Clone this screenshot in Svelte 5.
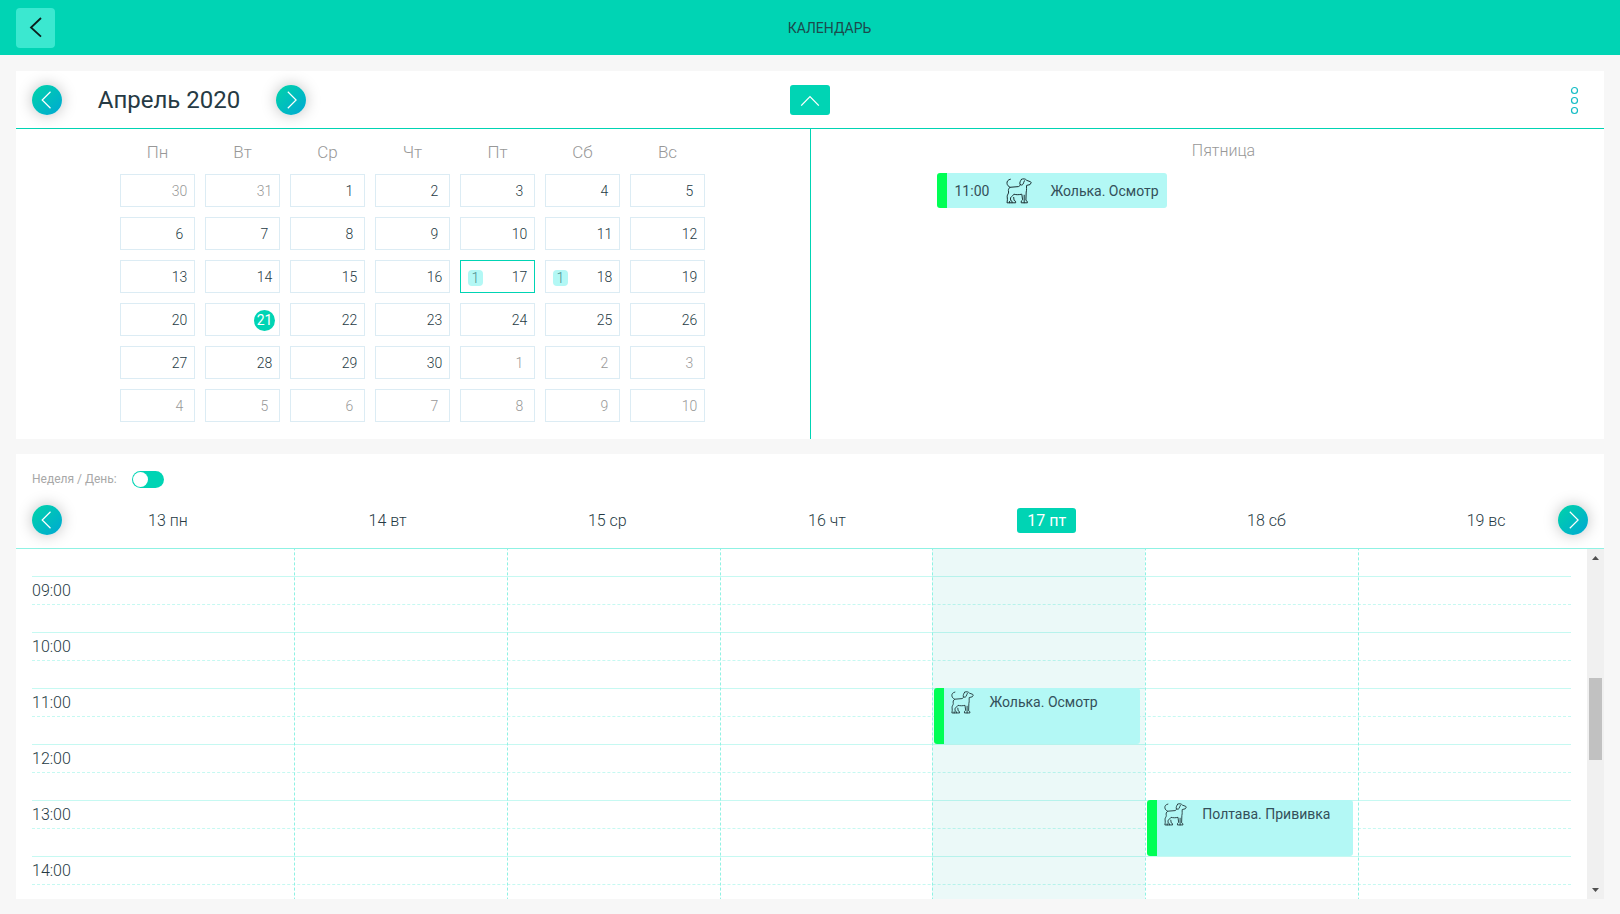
<script lang="ts">
	import { onMount } from 'svelte';

	type CalendarEvent = { day: number; hour: number; hours: number; title: string };

	const HOUR_HEIGHT = 56;
	const DAY_START = 477;

	const weekdays = ['Пн', 'Вт', 'Ср', 'Чт', 'Пт', 'Сб', 'Вс'];
	const hours = Array.from({ length: 24 }, (_, i) => i);

	const events: CalendarEvent[] = [
		{ day: 17, hour: 11, hours: 1, title: 'Жолька. Осмотр' },
		{ day: 18, hour: 13, hours: 1, title: 'Полтава. Прививка' }
	];

	const today = 21;
	let selected = 17;
	let monthOpen = true;
	let dayMode = false;

	// April 2020 starts on a Wednesday, six full weeks are always shown
	const cells = Array.from({ length: 42 }, (_, i) => {
		const n = i - 1;
		if (n < 1) return { day: n + 31, current: false };
		if (n > 30) return { day: n - 30, current: false };
		return { day: n, current: true };
	});

	const week = [13, 14, 15, 16, 17, 18, 19].map((day, i) => ({
		day,
		label: `${day} ${weekdays[i].toLowerCase()}`
	}));

	$: dayEvents = events.filter((e) => e.day === selected);

	let scroller: HTMLDivElement;
	let viewHeight = 350;
	let scrollTop = DAY_START;
	const total = HOUR_HEIGHT * 24;

	$: thumbTop = (scrollTop / total) * 100;
	$: thumbHeight = (viewHeight / total) * 100;

	// labels outside the viewport are not rendered
	$: inView = (hour: number) => {
		const top = hour * HOUR_HEIGHT;
		return top + HOUR_HEIGHT / 2 > scrollTop && top < scrollTop + viewHeight;
	};

	const formatHour = (hour: number) => `${String(hour).padStart(2, '0')}:00`;
	const countFor = (day: number) => events.filter((e) => e.day === day).length;
	const scrollBy = (delta: number) => scroller.scrollBy({ top: delta });

	onMount(() => {
		scroller.scrollTop = DAY_START;
	});
</script>

{#snippet chevron(direction: 'left' | 'right')}
	<svg width="30" height="30" viewBox="0 0 30 30" fill="none" stroke="currentColor" stroke-width="1.2">
		{#if direction === 'left'}
			<path d="M18.5 6.8L10.2 15l8.3 8.2" />
		{:else}
			<path d="M11.8 6.8l8.3 8.2-8.3 8.2" />
		{/if}
	</svg>
{/snippet}

{#snippet dog(size: number)}
	<svg
		class="dog"
		width={size}
		height={size}
		viewBox="0 0 26 26"
		fill="none"
		stroke="#1d3336"
		stroke-width="1"
		stroke-linejoin="round"
		stroke-linecap="round"
	>
		<path
			d="M4.4 1.2C1.8 1.8.8 3.4 1 5.4 1.2 7.4 2.6 8.4 4 9.3L12.4 8.6C13.600 8.300 14.200 7.400 14.400 6.400"
		/>
		<path
			d="M4 9.300C2.600 10.400 2 12 2.600 14 2.800 15.400 1.200 16.800 1.200 18.200L1.400 21.800 1 24.800H6.200L6 23.200 4.600 22.400 4.500 19.600C6 18.400 7.400 17.200 7.900 16.200 10.400 16.900 13.200 16.800 15.800 16.200L16.600 21.800 15.300 23 15.200 24.800H21.400L21.200 23.300 19.900 22.400 20.200 14C20.900 11.600 20.300 9.600 20.600 7.400L24 6.600 25.200 4.700 24.600 3.800 20.800 2.400C19.600.7 17 .4 15.500 1.300"
		/>
		<path d="M15.500 1.300C14.400 2.700 13.500 4.900 13.900 6.100 14.600 7.400 16.200 7.300 17 6.200 17.800 5 17.700 3.500 18.400 2.700" />
		<path d="M6.200 24.800H9.700L9.500 23.200 8.100 22.400 7.700 19.400M18.200 17.200V24.800M3.600 23.400V24.800" />
	</svg>
{/snippet}

<div class="page">
	<header class="top-bar">
		<button type="button" class="back" aria-label="Назад">
			<svg width="39" height="40" viewBox="0 0 39 40" fill="none" stroke="#0b1f1d" stroke-width="1.8">
				<path d="M25 10L15 19.500l10 9.200" />
			</svg>
		</button>
		<h1>КАЛЕНДАРЬ</h1>
	</header>

	<main>
		<section class="panel">
			<div class="month-bar">
				<div class="month-nav">
					<button type="button" class="round" aria-label="Предыдущий месяц">{@render chevron('left')}</button>
					<h2>Апрель 2020</h2>
					<button type="button" class="round" aria-label="Следующий месяц">{@render chevron('right')}</button>
				</div>
				<button
					type="button"
					class="collapse"
					aria-label="Свернуть"
					aria-expanded={monthOpen}
					on:click={() => (monthOpen = !monthOpen)}
				>
					<svg width="40" height="30" viewBox="0 0 40 30" fill="none" stroke="#fff" stroke-width="1.3">
						<path d="M11.200 20.600L20 11.600l8.800 9" />
					</svg>
				</button>
				<button type="button" class="more" aria-label="Меню">
					<svg width="28" height="30" viewBox="0 0 28 30" fill="none" stroke="#14bcc4" stroke-width="1.2">
						<circle cx="14.500" cy="5.500" r="3" />
						<circle cx="14.500" cy="15.500" r="3" />
						<circle cx="14.500" cy="25.500" r="3" />
					</svg>
				</button>
			</div>

			{#if monthOpen}
				<div class="month-body">
					<div class="month-pane">
						<div class="month-grid">
							{#each weekdays as name}
								<span class="weekday">{name}</span>
							{/each}
							{#each cells as cell}
								{@const count = cell.current ? countFor(cell.day) : 0}
								<button
									type="button"
									class="cell"
									class:muted={!cell.current}
									class:selected={cell.current && cell.day === selected}
									on:click={() => cell.current && (selected = cell.day)}
								>
									{#if count}
										<span class="count">{count}</span>
									{/if}
									<span class="number" class:today={cell.current && cell.day === today}>{cell.day}</span>
								</button>
							{/each}
						</div>
					</div>
					<div class="day-pane">
						<div class="day-list">
							<h3>Пятница</h3>
							{#each dayEvents as event}
								<button type="button" class="day-event">
									<span class="time">{formatHour(event.hour)}</span>
									{@render dog(26)}
									<span>{event.title}</span>
								</button>
							{/each}
						</div>
					</div>
				</div>
			{/if}
		</section>

		<section class="panel week">
			<label class="mode">
				<span>Неделя / День:</span>
				<input type="checkbox" role="switch" bind:checked={dayMode} />
			</label>
			<div class="week-bar">
				<button type="button" class="round" aria-label="Предыдущая неделя">{@render chevron('left')}</button>
				<div class="week-days">
					{#each week as item}
						<div class="week-day">
							<span class:active={item.day === selected}>{item.label}</span>
						</div>
					{/each}
				</div>
				<button type="button" class="round" aria-label="Следующая неделя">{@render chevron('right')}</button>
			</div>

			<div class="schedule">
				<div
					class="scroller"
					bind:this={scroller}
					bind:clientHeight={viewHeight}
					on:scroll={() => (scrollTop = scroller.scrollTop)}
				>
					<div class="grid">
						<div class="hours">
							{#each hours as hour}
								<div class="hour">
									<span>{inView(hour) ? formatHour(hour) : ''}</span>
								</div>
							{/each}
						</div>
						<div class="columns">
							{#each week as item}
								<div class="column" class:active={item.day === selected}>
									{#each events.filter((e) => e.day === item.day) as event}
										<button
											type="button"
											class="event"
											style="top: {event.hour * HOUR_HEIGHT}px; height: {event.hours * HOUR_HEIGHT}px;"
										>
											{@render dog(23)}
											<span>{event.title}</span>
										</button>
									{/each}
								</div>
							{/each}
						</div>
					</div>
				</div>
				<div class="scrollbar">
					<button type="button" aria-label="Вверх" on:click={() => scrollBy(-HOUR_HEIGHT)}>
						<svg width="17" height="17" viewBox="0 0 17 17" fill="#505050"><path d="M5 11h7L8.500 7z" /></svg>
					</button>
					<div class="track">
						<div class="thumb" style="top: {thumbTop}%; height: {thumbHeight}%;"></div>
					</div>
					<button type="button" aria-label="Вниз" on:click={() => scrollBy(HOUR_HEIGHT)}>
						<svg width="17" height="17" viewBox="0 0 17 17" fill="#505050"><path d="M5 6h7l-3.500 4z" /></svg>
					</button>
				</div>
			</div>
		</section>
	</main>
</div>

<style>
	:global(body) {
		margin: 0;
		background: #f7f7f7;
	}

	.page {
		--accent: #00d4b4;
		--text: #263a44;
		--muted: #a8a8a8;
		--event: #b3f8f5;
		--event-text: #33505a;
		display: flex;
		flex-direction: column;
		height: 100vh;
		font-family: Roboto, 'Liberation Sans', sans-serif;
		font-size: 14px;
		font-weight: 400;
		color: var(--text);
	}

	.page * {
		box-sizing: border-box;
	}

	h1,
	h2,
	h3 {
		margin: 0;
		font-weight: 400;
	}

	button {
		padding: 0;
		border: none;
		background: none;
		font: inherit;
		color: inherit;
		cursor: pointer;
	}

	svg {
		display: block;
		flex: none;
	}

	.top-bar {
		display: flex;
		align-items: center;
		flex: none;
		height: 55px;
		padding: 0 16px;
		background: var(--accent);
	}

	.top-bar h1 {
		flex: 1;
		font-size: 14px;
		line-height: 16px;
		text-align: center;
		color: #1c4a4c;
	}

	.back {
		border-radius: 4px;
		background: #3be8d0;
	}

	main {
		display: flex;
		flex: 1;
		flex-direction: column;
		gap: 15px;
		min-height: 0;
		padding: 16px 16px 15px;
	}

	.panel {
		background: #fff;
	}

	.month-bar {
		display: grid;
		grid-template-columns: 1fr auto 1fr;
		align-items: center;
		height: 58px;
		padding: 0 16px;
		border-bottom: 1px solid var(--accent);
	}

	.month-nav {
		display: flex;
		align-items: center;
	}

	.month-nav h2 {
		width: 214px;
		font-size: 24px;
		text-align: center;
	}

	.round {
		position: relative;
		z-index: 1;
		flex: none;
		width: 30px;
		height: 30px;
		border-radius: 50%;
		background: linear-gradient(135deg, #00d4a8, #00a8d4);
		box-shadow: 0 0 15px rgba(0, 0, 0, 0.25);
		color: #fff;
	}

	.collapse {
		border-radius: 3px;
		background: var(--accent);
	}

	.more {
		justify-self: end;
	}

	.month-body {
		display: grid;
		grid-template-columns: 1fr 1fr;
		height: 310px;
	}

	.month-pane {
		display: flex;
		justify-content: center;
		padding: 12px 1px 0 0;
	}

	.month-grid {
		display: grid;
		grid-template-columns: repeat(7, 75px);
		grid-template-rows: 23px repeat(6, 33px);
		gap: 10px;
	}

	.weekday {
		font-size: 17px;
		font-weight: 300;
		line-height: 23px;
		text-align: center;
		color: #989898;
	}

	.cell {
		display: flex;
		align-items: center;
		padding: 2px 4px 0 7px;
		border: 1px solid #dcecf4;
		font-weight: 300;
	}

	.cell.muted {
		color: #989898;
	}

	.cell.selected {
		border-color: var(--accent);
	}

	.count {
		width: 15px;
		border-radius: 4px;
		background: var(--event);
		line-height: 16px;
		color: #4f8f8e;
	}

	.number {
		width: 21px;
		margin-left: auto;
		border-radius: 50%;
		line-height: 21px;
		text-align: center;
	}

	.number.today {
		background: var(--accent);
		font-weight: 400;
		color: #fff;
	}

	.day-pane {
		padding: 10px 0 0 32px;
		border-left: 1px solid var(--accent);
	}

	.day-list {
		display: flex;
		flex-direction: column;
		align-items: flex-start;
		gap: 11px;
		max-width: 574px;
		margin: 0 auto;
	}

	.day-list h3 {
		align-self: stretch;
		font-size: 16px;
		font-weight: 300;
		line-height: 23px;
		text-align: center;
		color: #989898;
	}

	.day-event {
		display: flex;
		align-items: center;
		height: 35px;
		padding-right: 8px;
		border-left: 10px solid #00ff55;
		border-radius: 3px;
		background: var(--event);
		color: var(--event-text);
	}

	.day-event .time {
		padding: 0 17px 0 8px;
	}

	.day-event .dog {
		margin-right: 18px;
	}

	.week {
		display: flex;
		flex: 1;
		flex-direction: column;
		min-height: 0;
	}

	.mode {
		display: flex;
		align-items: center;
		align-self: flex-start;
		gap: 15px;
		padding: 16px 16px 0;
		font-size: 12px;
		line-height: 18px;
		color: var(--muted);
	}

	.mode input {
		appearance: none;
		width: 32px;
		height: 17px;
		margin: 0;
		padding: 1px;
		border-radius: 9px;
		background: var(--accent);
		cursor: pointer;
	}

	.mode input::before {
		content: '';
		display: block;
		width: 15px;
		height: 15px;
		border-radius: 50%;
		background: #fff;
	}

	.mode input:checked::before {
		margin-left: 15px;
	}

	.week-bar {
		display: flex;
		align-items: center;
		padding: 17px 16px 13px;
		border-bottom: 1px solid #8ff2e4;
	}

	.week-days {
		display: grid;
		flex: 1;
		grid-template-columns: repeat(7, 1fr);
		margin: 0 -38px 0 -4px;
	}

	.week-day {
		font-size: 16px;
		font-weight: 300;
		line-height: 25px;
		text-align: center;
	}

	.week-day span {
		display: inline-block;
		padding: 0 10px;
		border-radius: 3px;
	}

	.week-day .active {
		background: var(--accent);
		font-weight: 400;
		color: #fff;
	}

	.schedule {
		display: flex;
		flex: 1;
		min-height: 0;
	}

	.scroller {
		flex: 1;
		overflow-y: scroll;
		padding: 0 16px;
		scrollbar-width: none;
	}

	.grid {
		display: grid;
	}

	.hours,
	.columns {
		grid-area: 1 / 1;
	}

	.hour {
		height: 56px;
		border-top: 1px solid #c6f9f2;
		font-size: 16px;
		font-weight: 300;
		line-height: 27px;
	}

	.hour span {
		display: block;
		height: 28px;
		border-bottom: 1px dashed #c6f9f2;
	}

	.columns {
		display: grid;
		grid-template-columns: repeat(7, 1fr);
		margin-left: 49px;
	}

	.column {
		position: relative;
		border-left: 1px dashed #8ff2e4;
	}

	.column:first-child {
		border-left: none;
	}

	.column.active {
		background: rgba(0, 180, 170, 0.08);
	}

	.event {
		position: absolute;
		left: 1px;
		right: 5px;
		display: flex;
		align-items: flex-start;
		padding: 3px 8px 0 7px;
		border-left: 10px solid #00ff55;
		border-radius: 3px;
		background: var(--event);
		color: var(--event-text);
	}

	.event span {
		margin-left: 15px;
		line-height: 22px;
	}

	.scrollbar {
		display: flex;
		flex-direction: column;
		width: 17px;
		background: #f0f0f0;
	}

	.track {
		position: relative;
		flex: 1;
	}

	.thumb {
		position: absolute;
		left: 2px;
		right: 2px;
		background: #c1c1c1;
	}
</style>
